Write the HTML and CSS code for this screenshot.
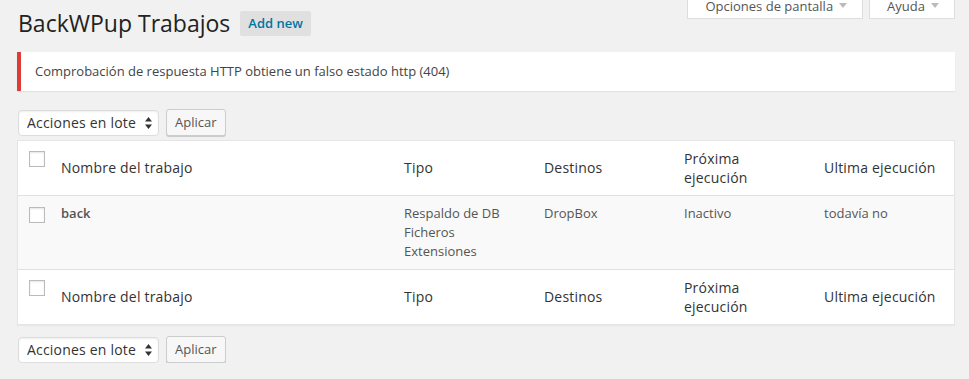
FILE: index.html
```html
<!DOCTYPE html>
<html lang="es">
<head>
  <meta charset="UTF-8">
  <meta name="viewport" content="width=device-width, initial-scale=1.0">
  <title>BackWPup Trabajos</title>
  <link rel="stylesheet" href="styles.css">
</head>
<body>
  <div class="wrap">
    <div class="top">
      <div class="title-row">
        <h1>BackWPup Trabajos</h1>
        <a class="add-new" href="#">Add new</a>
      </div>
      <div class="screen-links">
        <button class="screen-tab">Opciones de pantalla
          <svg width="8" height="5" viewBox="0 0 8 5"><path d="M0 0h8L4 5z" fill="#bbb"/></svg>
        </button>
        <button class="screen-tab">Ayuda
          <svg width="8" height="5" viewBox="0 0 8 5"><path d="M0 0h8L4 5z" fill="#bbb"/></svg>
        </button>
      </div>
    </div>

    <div class="notice">
      <p>Comprobación de respuesta HTTP obtiene un falso estado http (404)</p>
    </div>

    <div class="tablenav top-nav">
      <div class="bulk-select">
        <select>
          <option>Acciones en lote</option>
        </select>
        <svg class="select-arrows" width="7" height="12" viewBox="0 0 7 12"><path d="M3.5 0L7 4.5H0z M3.5 12L0 7.5h7z" fill="#333"/></svg>
      </div>
      <button class="button">Aplicar</button>
    </div>

    <table class="jobs">
      <colgroup>
        <col class="col-check">
        <col class="col-name">
        <col class="col-std">
        <col class="col-std">
        <col class="col-std">
        <col class="col-std">
      </colgroup>
      <thead>
        <tr>
          <th class="check-column"><input type="checkbox"></th>
          <th>Nombre del trabajo</th>
          <th>Tipo</th>
          <th>Destinos</th>
          <th>Próxima ejecución</th>
          <th>Ultima ejecución</th>
        </tr>
      </thead>
      <tbody>
        <tr>
          <td class="check-column"><input type="checkbox"></td>
          <td><strong>back</strong></td>
          <td>Respaldo de DB<br>Ficheros<br>Extensiones</td>
          <td>DropBox</td>
          <td>Inactivo</td>
          <td>todavía no</td>
        </tr>
      </tbody>
      <tfoot>
        <tr>
          <th class="check-column"><input type="checkbox"></th>
          <th>Nombre del trabajo</th>
          <th>Tipo</th>
          <th>Destinos</th>
          <th>Próxima ejecución</th>
          <th>Ultima ejecución</th>
        </tr>
      </tfoot>
    </table>

    <div class="tablenav bottom-nav">
      <div class="bulk-select">
        <select>
          <option>Acciones en lote</option>
        </select>
        <svg class="select-arrows" width="7" height="12" viewBox="0 0 7 12"><path d="M3.5 0L7 4.5H0z M3.5 12L0 7.5h7z" fill="#333"/></svg>
      </div>
      <button class="button">Aplicar</button>
    </div>
  </div>
</body>
</html>
```

FILE: styles.css
```css
body {
  margin: 0;
  padding: 0;
  background-color: #f1f1f1;
  font-family: "Open Sans", sans-serif;
  font-size: 13px;
  color: #444;
}

.wrap {
  padding: 0 14px 0 17px;
}

.top {
  display: flex;
  justify-content: space-between;
  align-items: flex-start;
}

.title-row {
  display: flex;
  align-items: center;
  padding: 9px 0 4px 1px;
}

.title-row h1 {
  margin: 0;
  font-size: 23px;
  font-weight: 400;
  line-height: 29px;
  color: #222;
}

.add-new {
  margin-left: 10px;
  padding: 0 8px;
  height: 25px;
  line-height: 25px;
  background-color: #e0e0e0;
  border-radius: 2px;
  color: #0074a2;
  font-weight: 600;
  font-size: 13px;
  text-decoration: none;
}

.screen-links {
  display: flex;
  gap: 6px;
}

.screen-tab {
  display: flex;
  align-items: center;
  gap: 6px;
  padding: 0 15px 7px 17px;
  height: 19px;
  line-height: 12px;
  background-color: #fff;
  border: 1px solid #ddd;
  border-top: none;
  font-family: "Open Sans", sans-serif;
  font-size: 13px;
  color: #555;
  cursor: pointer;
}

.notice {
  margin: 10px 0 18px;
  padding: 1px 12px;
  background-color: #fff;
  border-left: 4px solid #dd3d36;
  box-shadow: 0 1px 1px rgba(0, 0, 0, 0.06);
}

.notice p {
  margin: 0.5em 0;
  padding: 2px;
  line-height: 1.5;
}

.tablenav {
  display: flex;
  align-items: center;
  gap: 7px;
  height: 27px;
  padding-left: 1px;
}

.top-nav {
  margin-bottom: 4px;
}

.bottom-nav {
  margin-top: 11px;
}

.bulk-select {
  position: relative;
}

.bulk-select select {
  appearance: none;
  -webkit-appearance: none;
  width: 141px;
  height: 26px;
  margin-top: 1px;
  padding: 0 8px;
  background-color: #fff;
  border: 1px solid #ddd;
  border-radius: 4px;
  box-shadow: inset 0 1px 2px rgba(0, 0, 0, 0.07);
  font-family: "Open Sans", sans-serif;
  font-size: 14px;
  letter-spacing: 0.2px;
  color: #333;
}

.select-arrows {
  position: absolute;
  right: 7px;
  top: 8px;
  pointer-events: none;
}

.button {
  height: 27px;
  padding: 0 8px;
  background-color: #f7f7f7;
  border: 1px solid #ccc;
  border-radius: 3px;
  box-shadow: 0 1px 0 #ccc;
  font-family: "Open Sans", sans-serif;
  font-size: 13px;
  color: #555;
  cursor: pointer;
}

.jobs {
  width: 938px;
  table-layout: fixed;
  border-collapse: separate;
  border-spacing: 0;
  background-color: #fff;
  border: 1px solid #e5e5e5;
  box-shadow: 0 1px 1px rgba(0, 0, 0, 0.04);
}

.col-check {
  width: 33px;
}

.col-name {
  width: 343px;
}

.col-std {
  width: 140px;
}

.jobs th,
.jobs td {
  padding: 8px 10px;
  line-height: 19px;
  text-align: left;
}

.jobs th {
  font-size: 14px;
  font-weight: 400;
  letter-spacing: 0.2px;
  color: #333;
  vertical-align: middle;
}

.jobs td {
  color: #555;
  vertical-align: top;
}

.jobs thead th {
  border-bottom: 1px solid #e1e1e1;
}

.jobs tfoot th {
  border-top: 1px solid #e1e1e1;
}

.jobs tbody tr {
  background-color: #f9f9f9;
}

.jobs td strong {
  font-weight: 600;
}

.jobs .check-column {
  padding: 10px 0 0 11px;
  vertical-align: top;
}

.jobs tbody .check-column {
  padding-top: 11px;
}

.check-column input {
  appearance: none;
  -webkit-appearance: none;
  display: block;
  margin: 0;
  width: 16px;
  height: 16px;
  background-color: #fff;
  border: 1px solid #bbb;
  box-shadow: inset 0 1px 2px rgba(0, 0, 0, 0.1);
}
```
